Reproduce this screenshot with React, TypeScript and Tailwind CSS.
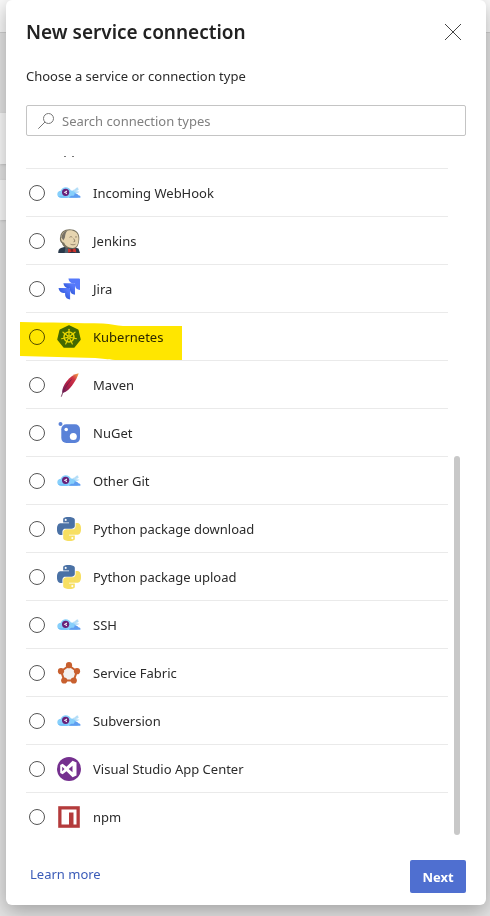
import type { ReactNode } from "react";

function CloudIcon() {
  return (
    <svg viewBox="0 0 24 24" className="h-6 w-6">
      <path d="M15.500 9.300c1.500-.6 2.700-.9 3.300-2 .6-.9 1.700-1.100 2.500-.5-.6.500-.2 1.100.6 1-.3 1.500-1.800 2.100-3.400 2.300 1.600.6 3 .5 4 .3-1 1.400-2.800 2-4.500 1.600z" fill="#b5def8" />
      <path d="M4.200 16.700C1.900 16.700.3 15.200.3 13.200c0-1.900 1.500-3.300 3.600-3.400C4.500 7.600 6.400 6.300 8.700 6.300c2.500 0 4.400 1.300 5.200 3.300 2.300-.2 4.200 1.200 4.900 3l2 4.100z" fill="#86cffb" />
      <path d="M12 16.700c.8-1.500 2.500-2.100 4.200-1.900 1.200-.4 1.600-1.300 1.200-2.300 2-.1 3.500.6 4 1.800 1.400.2 2.200 1.100 2.200 2 0 .3-.3.400-.7.400z" fill="#5f9df0" />
      <path d="M1 15c2 .7 4 .1 6 .2s3 .9 5 1.500H4.200C2.800 16.700 1.600 16 1 15z" fill="#6cbcf8" />
      <circle cx="8.600" cy="11.300" r="3.600" fill="#68217a" />
      <path d="m6.700 11.300 3.300-1.900v3.800z" fill="#fff" />
      <circle cx="9.200" cy="11.300" r=".6" fill="#68217a" />
    </svg>
  );
}

function JenkinsIcon() {
  return (
    <svg viewBox="0 0 24 24" className="h-6 w-6">
      <path d="M1.200 24c0-2.500.8-4.200 2.800-5l4-1.200 9 .4 4.500 1.300L23 24z" fill="#29394a" />
      <path d="M3.300 7.500C3.500 3.500 7 .3 12.500.3c6 0 9.800 3.400 9.800 8.500 0 3.200-.4 6.200-1.800 8.400-1.200 2-3 2.500-4.500 2.600l-6.500-.5c-2.500-1-4.300-3.200-4.700-5.300-1.700-.6-2.400-4-1.500-6.500z" fill="#77725f" />
      <path d="M4 9c.2-2 1.100-4.500 2.700-5.700C8.700 1.300 12.800.7 15.900 1.700c3.500 1 5.600 3.600 5.600 7.200.1 3-.3 5.800-1.500 7.700-1 1.600-2.900 2.500-4.700 2.300-3.700-.3-6.900-1.600-8.100-5.100C5.300 13.600 3.900 11.500 4 9z" fill="#e6d5b0" />
      <path d="M4.300 8.500C5 5 7 2 11 1.200 8.500 3.200 8.300 5.500 8 8c-.2 1.500-1.300 2-1.400 3.500z" fill="#777266" />
      <path d="M12.500 8.300c1-.8 2-.8 2.800 0M18 8.300c.7-.6 1.500-.6 2 0M16.700 9.500l1.300 2.700-1.500.6M13.500 15.200c1.700.8 3.500.8 5 0" fill="none" stroke="#8a7a62" strokeWidth=".9" />
      <path d="M8.500 18.500 12 20l-1 4H7.500z" fill="#50606c" />
      <path d="m11 19.500 3.800 1.300 3.700-1.500.8 4.200-4.200-1-4 1.200z" fill="#d0352f" />
      <circle cx="14.900" cy="21.500" r="1.200" fill="#81201e" />
    </svg>
  );
}

const jiraArrow = "M0 0h10.600a1 1 0 0 1 1 1v10.600C8.800 11.300 6.900 9.600 6.600 7V5H4.700C2.300 4.900.4 3 0 0z";

function JiraIcon() {
  return (
    <svg viewBox="0 0 24 24" className="h-6 w-6">
      <defs>
        <linearGradient id="arrow" x1="1" y1="0" x2=".3" y2=".7">
          <stop offset=".3" stopColor="#5579fb" />
          <stop offset="1" stopColor="#2f57d6" />
        </linearGradient>
      </defs>
      <path d={jiraArrow} transform="translate(1.500 11)" fill="url(#arrow)" />
      <path d={jiraArrow} transform="translate(6.400 6.200)" fill="url(#arrow)" />
      <path d={jiraArrow} transform="translate(11.400 1.400)" fill="#5579fb" />
    </svg>
  );
}

const spokes = [0, 51.43, 102.86, 154.29, 205.71, 257.14, 308.57];

function KubernetesIcon() {
  return (
    <svg viewBox="0 0 24 24" className="h-6 w-6">
      <path d="M12 1 20.800 5.200l2.200 9.300-6.100 7.500H7.100L1 14.500l2.200-9.300z" fill="#4273e8" stroke="#4273e8" strokeWidth="1.500" strokeLinejoin="round" />
      <circle cx="12" cy="12" r="5" fill="none" stroke="#e8eefc" strokeWidth="1.500" />
      {spokes.map((angle) => (
        <path key={angle} d="M12 10.500V4.300" stroke="#e8eefc" strokeWidth="1.200" strokeLinecap="round" transform={`rotate(${angle} 12 12)`} />
      ))}
      <circle cx="12" cy="12" r="1.700" fill="#e8eefc" />
      <circle cx="12" cy="12" r=".6" fill="#4273e8" />
    </svg>
  );
}

function MavenIcon() {
  return (
    <svg viewBox="0 0 24 24" className="h-6 w-6">
      <defs>
        <linearGradient id="feather" x1="1" y1="0" x2="0" y2="1">
          <stop offset="0" stopColor="#f6b04a" />
          <stop offset=".3" stopColor="#cf3445" />
          <stop offset=".6" stopColor="#b51f45" />
          <stop offset="1" stopColor="#68205c" />
        </linearGradient>
      </defs>
      <path d="M21.700.3c-.8 3-3.400 8-6.400 12-2.700 3.600-5.300 6.500-9.500 7.800C4.200 18.500 6 13 9.500 8.500 12.800 4.300 17 1.200 21.700.3z" fill="url(#feather)" />
      <path d="M14.500 6.500C10 11.500 6 17 4.300 23.700" fill="none" stroke="#642047" strokeWidth=".8" />
    </svg>
  );
}

function NuGetIcon() {
  return (
    <svg viewBox="0 0 24 24" className="h-6 w-6">
      <circle cx="3.500" cy="2.900" r="2" fill="#5a82d8" />
      <rect x="4.300" y="3.200" width="18.700" height="18.700" rx="5" fill="#5a82d8" />
      <circle cx="9.200" cy="8.500" r="1.800" fill="#fff" />
      <circle cx="16.300" cy="15.500" r="3.500" fill="#fff" />
    </svg>
  );
}

const snake =
  "M14.25.18l.9.2.73.26.59.3.45.32.34.34.25.34.16.33.1.3.04.26.02.2-.01.13V8.500l-.05.63-.13.55-.21.46-.26.38-.3.31-.33.25-.35.19-.35.14-.33.1-.3.07-.26.04-.21.02H8.770l-.69.05-.59.14-.5.22-.41.27-.33.32-.27.35-.2.36-.15.37-.1.35-.07.32-.04.27-.02.21v3.060H3.170l-.21-.03-.28-.07-.32-.12-.35-.18-.36-.26-.36-.36-.35-.46-.32-.59-.28-.73-.21-.88-.14-1.050-.05-1.230.06-1.220.16-1.040.24-.87.32-.71.36-.57.4-.44.42-.33.42-.24.4-.16.36-.1.32-.05.24-.01h.16l.06.01h8.160v-.83H6.180l-.01-2.750-.02-.37.05-.34.11-.31.17-.28.25-.26.31-.23.38-.2.44-.18.51-.15.58-.12.64-.1.71-.06.77-.04.84-.02 1.270.05zm-6.300 1.980l-.23.33-.08.41.08.41.23.34.33.22.41.09.41-.09.33-.22.23-.34.08-.41-.08-.41-.23-.33-.33-.22-.41-.09-.41.09z";

function PythonIcon() {
  return (
    <svg viewBox="0 0 24 24" className="h-6 w-6">
      <path d={snake} fill="#4a71a5" />
      <path d={snake} fill="#f7df62" transform="rotate(180 12 12)" />
    </svg>
  );
}

function ServiceFabricIcon() {
  return (
    <svg viewBox="0 0 24 24" className="h-6 w-6">
      <path d="m12 4.500 7.800 5.800-3 9.200H7.200l-3-9.200z" fill="#f3f2f1" stroke="#c8602f" strokeWidth="2" />
      <g fill="#c8602f">
        <circle cx="12" cy="4.200" r="3.100" />
        <circle cx="20" cy="10.200" r="3.100" />
        <circle cx="16.800" cy="19.500" r="3.100" />
        <circle cx="7.200" cy="19.500" r="3.100" />
        <circle cx="4" cy="10.200" r="3.100" />
      </g>
    </svg>
  );
}

function VisualStudioIcon() {
  return (
    <svg viewBox="0 0 24 24" className="h-6 w-6">
      <circle cx="12" cy="12" r="12" fill="#75308f" />
      <path
        fillRule="evenodd"
        d="m15.600 3.700 3.900 1.700v13.200l-3.900 1.700-6.100-6-3.900 2.900L3.200 16V8l2.400-1.200 3.900 2.900zM15.500 8.700 11.700 12l3.800 3.300zM5.200 9.800v4.400L7.500 12z"
        fill="#fff"
      />
    </svg>
  );
}

function NpmIcon() {
  return (
    <svg viewBox="0 0 24 24" className="h-6 w-6">
      <path d="M1.200 1.200h21.600v21.600H1.200z" fill="#b43b3c" />
      <path d="M4.500 4.500h15v15h-3V7.500H12v12H4.500z" fill="#fff" />
    </svg>
  );
}

const connections: { name: string; icon: ReactNode; marked?: boolean }[] = [
  { name: "Incoming WebHook", icon: <CloudIcon /> },
  { name: "Jenkins", icon: <JenkinsIcon /> },
  { name: "Jira", icon: <JiraIcon /> },
  { name: "Kubernetes", icon: <KubernetesIcon />, marked: true },
  { name: "Maven", icon: <MavenIcon /> },
  { name: "NuGet", icon: <NuGetIcon /> },
  { name: "Other Git", icon: <CloudIcon /> },
  { name: "Python package download", icon: <PythonIcon /> },
  { name: "Python package upload", icon: <PythonIcon /> },
  { name: "SSH", icon: <CloudIcon /> },
  { name: "Service Fabric", icon: <ServiceFabricIcon /> },
  { name: "Subversion", icon: <CloudIcon /> },
  { name: "Visual Studio App Center", icon: <VisualStudioIcon /> },
  { name: "npm", icon: <NpmIcon /> },
];

/* Marker stroke drawn over a row. */
function Highlight() {
  return (
    <svg viewBox="0 0 162 38" className="pointer-events-none absolute -left-1.5 top-[9px] h-[38px] w-[162px] mix-blend-multiply">
      <path d="M0 0c30 .5 60 1 83 1.500 8 .6 13 1.800 20 2.500h59v34H95c-8-.3-12-1.500-20-2L0 34z" fill="#ffe600" />
    </svg>
  );
}

/* The dimmed page that shows at both sides of the panel. */
function Backdrop() {
  return (
    <div className="absolute inset-0 -z-10 flex flex-col bg-[#e4e4e4]" aria-hidden="true">
      <div className="h-[33px] border-b border-[#d0d0d0] bg-[#fafafa]" />
      <div className="mt-20 flex flex-col gap-4">
        <div className="h-[51px] w-1/2 bg-[#fafafa] shadow" />
        <div className="h-10 w-1/2 bg-[#fafafa] shadow" />
      </div>
    </div>
  );
}

export default function App() {
  return (
    <div className="relative isolate min-h-screen overflow-hidden px-1.5 pb-[11px] pr-1 font-['Noto_Sans','Open_Sans',sans-serif] text-[13px] leading-5 text-[#2b2b2b]">
      <Backdrop />
      <main className="flex flex-col rounded-md bg-white px-5 pb-3 shadow-[0_6px_20px_rgba(0,0,0,0.3)]">
        <header className="flex items-center justify-between pt-4">
          <h1 className="text-[19px] font-semibold leading-8 text-[#222]">New service connection</h1>
          <button aria-label="Close" className="flex h-8 w-[26px] items-center justify-center">
            <svg viewBox="0 0 16 16" className="h-4 w-4" fill="none" stroke="#444">
              <path d="m0 0 16 16M16 0 0 16" />
            </svg>
          </button>
        </header>

        <p className="mt-[18px]">Choose a service or connection type</p>

        <label className="mt-[19px] flex h-[31px] items-center gap-2 rounded-xs border border-[#c4c4c4] px-[11px]">
          <svg viewBox="0 0 16 16" className="h-4 w-4 shrink-0" fill="none" stroke="#777">
            <circle cx="10.500" cy="5.500" r="5" />
            <path d="M7 9 .3 15.700" />
          </svg>
          <input
            type="text"
            aria-label="Search connection types"
            placeholder="Search connection types"
            className="min-w-0 flex-1 bg-transparent outline-none placeholder:text-[#808080]"
          />
        </label>

        <div className="mt-5 flex gap-1.5 pr-1.5">
          <div className="min-w-0 flex-1">
            {/* Tail of the row that is scrolled out of view */}
            <div className="flex h-[13px] border-b border-[#eaeaea] pl-[31px]">
              <svg viewBox="0 0 24 12" className="h-3 w-6" fill="#777">
                <path d="M7 0h2v1H7zM15 0h2v1h-2z" />
              </svg>
            </div>
            {connections.map(({ name, icon, marked }) => (
              <label key={name} className="relative flex h-12 items-center gap-3 border-b border-[#eaeaea] pl-[3px] pt-px last:border-transparent">
                <input type="radio" name="connection" className="h-4 w-4 shrink-0 appearance-none rounded-full border border-[#555] checked:border-4" />
                {icon}
                <span>{name}</span>
                {marked && <Highlight />}
              </label>
            ))}
          </div>
          <div className="flex w-1.5 flex-col justify-end pb-1.5">
            <div className="h-[379px] rounded-full bg-[#c8c8c8]" />
          </div>
        </div>

        <footer className="mt-[19px] flex items-center justify-between pl-1">
          <a href="#" className="pb-1.5 text-[#3a5bb8]">Learn more</a>
          <button className="h-[33px] w-14 rounded-xs bg-[#4f6fd0] font-bold text-white">Next</button>
        </footer>
      </main>
    </div>
  );
}
